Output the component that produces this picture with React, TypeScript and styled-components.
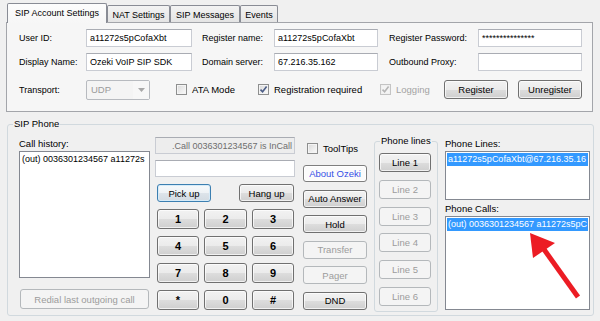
import React from 'react';
import styled, { createGlobalStyle, css } from 'styled-components';

const Global = createGlobalStyle`
  html, body { margin: 0; padding: 0; background: #f0f0f0; }
  body {
    width: 600px; height: 321px; overflow: hidden;
    font-family: "Liberation Sans", Arial, sans-serif;
    font-size: 9px; color: #000;
  }
  * { box-sizing: border-box; }
`;

const Window = styled.div`
  position: relative;
  width: 600px;
  height: 321px;
  padding: 3px 7px 0 6px;
  background: #f0f0f0;
`;

/* ---------- tabs ---------- */
const TabStrip = styled.div`
  display: flex;
  align-items: flex-start;
  height: 20px;
  margin: 0 0 -1px 1px;
  position: relative;
  z-index: 1;
`;

const Tab = styled.div<{ $active?: boolean; $w: number }>`
  width: ${p => p.$w}px;
  display: flex;
  align-items: center;
  justify-content: center;
  border: 1px solid #898c95;
  border-bottom: none;
  border-radius: 2px 2px 0 0;
  white-space: nowrap;
  ${p =>
    p.$active
      ? css`
          height: 20px;
          background: linear-gradient(#fdfdfd, #f6f6f6);
          padding-bottom: 1px;
        `
      : css`
          height: 17px;
          margin-top: 2px;
          background: linear-gradient(#f3f3f3, #e4e4e4);
          padding-top: 1px;
        `}
`;

const TabPage = styled.div`
  height: 90px;
  border: 1px solid #a3a5aa;
  background: #f6f6f6;
  padding: 6px 0 0 12px;
  display: flex;
  flex-direction: column;
`;

const FieldGrid = styled.div`
  display: grid;
  grid-template-columns: 67px 106px 82px 104px 100px 104px;
  grid-auto-rows: 18px;
  row-gap: 6px;
  align-items: center;
`;

const Label = styled.div<{ $pad?: number; $w?: number }>`
  padding-left: ${p => p.$pad ?? 0}px;
  ${p => (p.$w ? `width: ${p.$w}px; flex: none;` : '')}
  white-space: nowrap;
`;

const TextBox = styled.div<{ $h?: number; $readonly?: boolean; $right?: boolean; $mt?: number }>`
  height: ${p => p.$h ?? 18}px;
  margin-top: ${p => p.$mt ?? 0}px;
  border: 1px solid #c9ccd3;
  border-top-color: #a9acb3;
  background: ${p => (p.$readonly ? '#ededed' : '#fff')};
  color: ${p => (p.$readonly ? '#6d6d6d' : '#000')};
  padding: 0 ${p => (p.$right ? 2 : 3)}px 0 3px;
  display: flex;
  align-items: center;
  justify-content: ${p => (p.$right ? 'flex-end' : 'flex-start')};
  white-space: nowrap;
  overflow: hidden;
`;

const Password = styled.span`
  margin-top: -1px;
`;

const OptionRow = styled.div`
  display: flex;
  align-items: center;
  height: 21px;
  margin-top: 8px;
`;

const Combo = styled.div`
  width: 64px;
  height: 20px;
  border: 1px solid #b7babf;
  border-radius: 2px;
  background: #f4f4f4;
  display: flex;
  align-items: stretch;
  margin-right: 26px;
`;

const ComboValue = styled.div`
  flex: 1;
  display: flex;
  align-items: center;
  padding-left: 4px;
  color: #9a9a9a;
  font-size: 9.5px;
`;

const ComboArrow = styled.div`
  width: 16px;
  display: flex;
  align-items: center;
  justify-content: center;
  background: #f7f7f7;
`;

const CheckItem = styled.div<{ $w?: number; $disabled?: boolean }>`
  ${p => (p.$w ? `width: ${p.$w}px;` : '')}
  display: flex;
  align-items: center;
  gap: 5px;
  white-space: nowrap;
  color: ${p => (p.$disabled ? '#a3a3a3' : '#000')};
  font-size: 9.5px;
`;

const Box = styled.span<{ $disabled?: boolean }>`
  width: 11px;
  height: 11px;
  flex: none;
  border: 1px solid ${p => (p.$disabled ? '#c4c4c4' : '#8e8f8f')};
  background: ${p =>
    p.$disabled ? '#f4f4f4' : 'linear-gradient(135deg, #d9d9d9 0%, #eeeeee 60%, #fbfbfb 100%)'};
  box-shadow: inset 0 0 0 1px ${p => (p.$disabled ? '#f0f0f0' : '#f4f4f4')};
  display: flex;
  align-items: center;
  justify-content: center;
`;

/* ---------- buttons ---------- */
type BtnKind = 'normal' | 'disabled' | 'focus' | 'link' | 'key';

const Btn = styled.div<{ $w?: number; $h?: number; $kind?: BtnKind; $mt?: number; $ml?: number }>`
  width: ${p => (p.$w ? `${p.$w}px` : 'auto')};
  height: ${p => p.$h ?? 19}px;
  margin: ${p => p.$mt ?? 0}px 0 0 ${p => p.$ml ?? 0}px;
  flex: none;
  display: flex;
  align-items: center;
  justify-content: center;
  border-radius: 3px;
  white-space: nowrap;
  font-size: 9.5px;
  border: 1px solid #707070;
  color: #000;
  background: linear-gradient(#f2f2f2 0%, #ebebeb 50%, #dddddd 51%, #cfcfcf 100%);
  box-shadow: inset 0 0 0 1px rgba(255, 255, 255, 0.7);
  ${p =>
    p.$kind === 'disabled' &&
    css`
      border-color: #b4b8bb;
      background: #f4f4f4;
      color: #9c9c9c;
      box-shadow: none;
    `}
  ${p =>
    p.$kind === 'focus' &&
    css`
      border-color: #3c7fb1;
      background: linear-gradient(#f6f9fb 0%, #eef2f5 50%, #dde4ea 51%, #d3dbe2 100%);
      box-shadow: inset 0 0 0 1px #d6ebf8;
    `}
  ${p =>
    p.$kind === 'link' &&
    css`
      border-color: #7e7e7e;
      background: #fbfbfb;
      color: #3650e6;
      box-shadow: inset 0 0 0 1px #ffffff;
    `}
  ${p =>
    p.$kind === 'key' &&
    css`
      font-weight: bold;
      font-size: 11px;
    `}
`;

const ButtonGap = styled.div<{ $w: number }>`
  width: ${p => p.$w}px;
  flex: none;
`;

/* ---------- group boxes ---------- */
const GroupBox = styled.div<{ $w: number; $h: number; $mt?: number; $ml?: number }>`
  width: ${p => p.$w}px;
  height: ${p => p.$h}px;
  margin: ${p => p.$mt ?? 0}px 0 0 ${p => p.$ml ?? 0}px;
  border: 1px solid #d1d9de;
  border-radius: 3px;
  flex: none;
`;

const Legend = styled.div<{ $indent: number }>`
  width: fit-content;
  height: 12px;
  line-height: 12px;
  margin: -7px 0 0 ${p => p.$indent}px;
  padding: 0 1px;
  background: #f0f0f0;
  white-space: nowrap;
  font-size: 9.5px;
`;

const Columns = styled.div`
  display: flex;
  align-items: flex-start;
  margin-top: 7px;
  padding-left: 11px;
`;

const Column = styled.div<{ $w: number; $ml?: number }>`
  width: ${p => p.$w}px;
  margin-left: ${p => p.$ml ?? 0}px;
  flex: none;
  display: flex;
  flex-direction: column;
`;

const ColLabel = styled.div<{ $mt?: number }>`
  height: 13px;
  line-height: 13px;
  margin-top: ${p => p.$mt ?? 0}px;
  white-space: nowrap;
  font-size: 9.5px;
`;

const ListBox = styled.div<{ $h: number; $mt?: number }>`
  height: ${p => p.$h}px;
  margin-top: ${p => p.$mt ?? 1}px;
  border: 1px solid #848891;
  background: #fff;
  padding: 1px;
  overflow: hidden;
`;

const ListItem = styled.div<{ $selected?: boolean }>`
  height: 13px;
  line-height: 13px;
  padding-left: 1px;
  white-space: nowrap;
  overflow: hidden;
  font-size: 9px;
  background: ${p => (p.$selected ? '#3399ff' : 'transparent')};
  color: ${p => (p.$selected ? '#fff' : '#000')};
`;

const Stack = styled.div<{ $gap: number; $mt?: number; $pl?: number }>`
  display: flex;
  flex-direction: column;
  gap: ${p => p.$gap}px;
  margin-top: ${p => p.$mt ?? 0}px;
  padding-left: ${p => p.$pl ?? 0}px;
`;

const SpreadRow = styled.div<{ $mt?: number }>`
  display: flex;
  justify-content: space-between;
  margin-top: ${p => p.$mt ?? 0}px;
  padding: 0 1px 0 2px;
`;

const Keypad = styled.div`
  display: grid;
  grid-template-columns: 42px 43px 42px;
  grid-auto-rows: 20px;
  justify-content: space-between;
  row-gap: 7px;
  margin-top: 7px;
  padding: 0 1px 0 2px;
`;

const CheckRow = styled.div`
  height: 22px;
  display: flex;
  align-items: center;
  padding-left: 4px;
`;

const ArrowLayer = styled.svg`
  position: absolute;
  left: 0;
  top: 0;
  pointer-events: none;
`;

/* ---------- small parts ---------- */
const CheckMark: React.FC<{ color: string }> = ({ color }) => (
  <svg width="9" height="9" viewBox="0 0 9 9">
    <path d="M1.5 4.6 L3.6 6.8 L7.6 1.6" fill="none" stroke={color} strokeWidth="1.6" />
  </svg>
);

const Check: React.FC<{ label: string; checked?: boolean; disabled?: boolean; w?: number }> = ({
  label,
  checked,
  disabled,
  w,
}) => (
  <CheckItem $w={w} $disabled={disabled}>
    <Box $disabled={disabled}>{checked && <CheckMark color={disabled ? '#b5b5b5' : '#4b5c86'} />}</Box>
    {label}
  </CheckItem>
);

const keys = ['1', '2', '3', '4', '5', '6', '7', '8', '9', '*', '0', '#'];

export default function App() {
  return (
    <>
      <Global />
      <Window>
        <TabStrip>
          <Tab $active $w={100}>SIP Account Settings</Tab>
          <Tab $w={63}>NAT Settings</Tab>
          <Tab $w={70}>SIP Messages</Tab>
          <Tab $w={38}>Events</Tab>
        </TabStrip>

        <TabPage>
          <FieldGrid>
            <Label>User ID:</Label>
            <TextBox>a11272s5pCofaXbt</TextBox>
            <Label $pad={10}>Register name:</Label>
            <TextBox>a11272s5pCofaXbt</TextBox>
            <Label $pad={11}>Register Password:</Label>
            <TextBox>
              <Password>***************</Password>
            </TextBox>

            <Label>Display Name:</Label>
            <TextBox>Ozeki VoIP SIP SDK</TextBox>
            <Label $pad={10}>Domain server:</Label>
            <TextBox>67.216.35.162</TextBox>
            <Label $pad={11}>Outbound Proxy:</Label>
            <TextBox />
          </FieldGrid>

          <OptionRow>
            <Label $w={67}>Transport:</Label>
            <Combo>
              <ComboValue>UDP</ComboValue>
              <ComboArrow>
                <svg width="7" height="4" viewBox="0 0 7 4">
                  <path d="M0 0 L7 0 L3.5 4 Z" fill="#a8a8a8" />
                </svg>
              </ComboArrow>
            </Combo>
            <Check label="ATA Mode" w={82} />
            <Check label="Registration required" checked w={122} />
            <Check label="Logging" checked disabled w={64} />
            <Btn $w={64}>Register</Btn>
            <ButtonGap $w={10} />
            <Btn $w={64}>Unregister</Btn>
          </OptionRow>
        </TabPage>

        <GroupBox $w={587} $h={192} $mt={12} $ml={1}>
          <Legend $indent={5}>SIP Phone</Legend>
          <Columns>
            <Column $w={131}>
              <ColLabel>Call history:</ColLabel>
              <ListBox $h={127}>
                <ListItem>(out) 0036301234567 a11272s</ListItem>
              </ListBox>
              <Btn $kind="disabled" $h={20} $w={129} $mt={11} $ml={1}>
                Redial last outgoing call
              </Btn>
            </Column>

            <Column $w={140} $ml={5}>
              <TextBox $h={17} $readonly $right>
                .Call 0036301234567 is InCall
              </TextBox>
              <TextBox $h={17} $mt={6} />
              <SpreadRow $mt={7}>
                <Btn $kind="focus" $w={54} $h={18}>
                  Pick up
                </Btn>
                <Btn $w={55} $h={18}>
                  Hang up
                </Btn>
              </SpreadRow>
              <Keypad>
                {keys.map(k => (
                  <Btn key={k} $kind="key" $h={20}>
                    {k}
                  </Btn>
                ))}
              </Keypad>
            </Column>

            <Column $w={64} $ml={8}>
              <CheckRow>
                <Check label="ToolTips" />
              </CheckRow>
              <Stack $gap={7.5} $mt={6}>
                <Btn $kind="link" $h={17}>
                  About Ozeki
                </Btn>
                <Btn $h={18}>Auto Answer</Btn>
                <Btn $h={18}>Hold</Btn>
                <Btn $kind="disabled" $h={18}>
                  Transfer
                </Btn>
                <Btn $kind="disabled" $h={18}>
                  Pager
                </Btn>
                <Btn $h={18}>DND</Btn>
              </Stack>
            </Column>

            <Column $w={64} $ml={7}>
              <GroupBox $w={64} $h={171} $mt={4}>
                <Legend $indent={5}>Phone lines</Legend>
                <Stack $gap={7.8} $mt={6} $pl={4}>
                  <Btn $w={52}>Line 1</Btn>
                  <Btn $w={52} $kind="disabled">Line 2</Btn>
                  <Btn $w={52} $kind="disabled">Line 3</Btn>
                  <Btn $w={52} $kind="disabled">Line 4</Btn>
                  <Btn $w={52} $kind="disabled">Line 5</Btn>
                  <Btn $w={52} $kind="disabled">Line 6</Btn>
                </Stack>
              </GroupBox>
            </Column>

            <Column $w={145} $ml={7}>
              <ColLabel>Phone Lines:</ColLabel>
              <ListBox $h={49}>
                <ListItem $selected>a11272s5pCofaXbt@67.216.35.16</ListItem>
              </ListBox>
              <ColLabel $mt={2}>Phone Calls:</ColLabel>
              <ListBox $h={94}>
                <ListItem $selected>(out) 0036301234567 a11272s5pC</ListItem>
              </ListBox>
            </Column>
          </Columns>
        </GroupBox>

        <ArrowLayer width="600" height="321" viewBox="0 0 600 321">
          <line x1="543" y1="248" x2="578" y2="297" stroke="#ec1c24" strokeWidth="5" />
          <polygon points="530,233 555,243 533,258" fill="#ec1c24" />
        </ArrowLayer>
      </Window>
    </>
  );
}
